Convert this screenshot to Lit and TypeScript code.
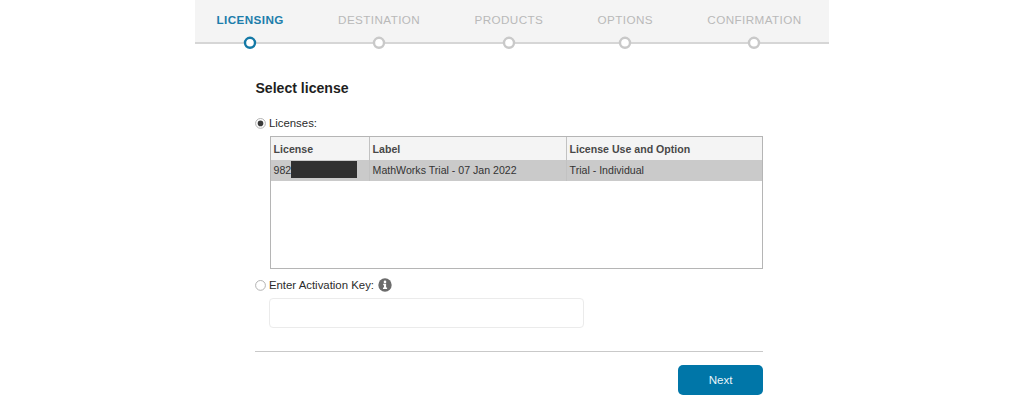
import { LitElement, html, css } from "lit";
import { customElement, state } from "lit/decorators.js";
import { classMap } from "lit/directives/class-map.js";

@customElement("step-header")
class StepHeader extends LitElement {
  static styles = css`
    :host { display: block; background: linear-gradient(#f4f4f4 0 42px, #d6d6d6 42px 43.5px, #fff 44px); height: 50px; }
    ol { list-style: none; margin: 0; padding: 12.4px 27.5px 0 22px; display: flex; justify-content: space-between; }
    li { display: flex; flex-direction: column; align-items: center; color: #b9b9b9; font-size: 11.7px; letter-spacing: 0.4px; line-height: 15px; }
    .on { color: #1d7dab; font-weight: bold; }
    svg { display: block; margin-top: 8.6px; width: 14px; height: 14px; }
  `;
  render() {
    const steps = ["LICENSING", "DESTINATION", "PRODUCTS", "OPTIONS", "CONFIRMATION"];
    return html`<ol>${steps.map((s, i) => html`
      <li class=${classMap({ on: i === 0 })}>
        <span>${s}</span>
        <svg viewBox="0 0 14 14"><circle cx="7" cy="6.8" r="5" fill="#fff" stroke=${i === 0 ? "#1479a6" : "#c9c9c9"} stroke-width="2.4"/></svg>
      </li>`)}</ol>`;
  }
}

@customElement("app-root")
class AppRoot extends LitElement {
  static styles = css`
    :host { display: block; height: 400px; overflow: hidden; background: #fff; color: #2b2b2b; font-family: "Liberation Sans", Arial, sans-serif; }
    step-header { width: 634.5px; margin-left: 194.5px; }
    main { width: 508px; margin-left: 255.4px; padding-top: 29px; }
    h1 { margin: 0; font-size: 14.1px; line-height: 18px; color: #1f1f1f; transform: scaleY(1.06); }
    .choice { display: flex; align-items: center; height: 16px; font-size: 11.4px; }
    .first { margin-top: 18px; }
    .radio { width: 11px; height: 11px; margin-right: 2.5px; display: block; }
    .info { width: 14px; height: 14px; margin-left: 4px; }
    .table { box-sizing: border-box; margin: 5px 0 0 14.2px; height: 132.5px; border: 1px solid #b5b5b5; font-size: 10.6px; }
    .row { display: grid; grid-template-columns: 98.4px 197px 1fr; height: 20.5px; background: #cacaca; line-height: 20px; color: #333; }
    .head { height: 23px; line-height: 22px; background: #f4f4f4; font-weight: bold; color: #484848; }
    .cell { padding-left: 3px; display: flex; align-items: center; }
    .cell .t { transform: scaleY(1.1); }
    .cell + .cell { border-left: 1px solid #c2c2c2; padding-left: 2.6px; }
    .mask { width: 66px; height: 17px; background: #303030; margin-top: -2px; }
    .second { margin-top: 8.5px; }
    .key { display: block; box-sizing: border-box; width: 315px; height: 30px; margin: 5px 0 0 13.5px; border: 1px solid #ebebeb; border-radius: 4px; background: #fff; outline: none; padding: 0 8px; }
    .foot { margin-top: 23px; border-top: 1px solid #c9c9c9; padding-top: 13px; display: flex; justify-content: flex-end; }
    button { width: 85.6px; height: 29.5px; border: 0; border-radius: 5px; background: #0076a8; color: #e9f5fa; font: 11.6px "Liberation Sans", Arial, sans-serif; padding: 0 0 1px; }
  `;

  @state() private choice = "license";

  private radio(name: string) {
    return html`<svg class="radio" viewBox="0 0 11 11" @click=${() => (this.choice = name)}>
      <circle cx="5.5" cy="5.4" r="4.9" fill="#fff" stroke="#aaa" stroke-width="0.9"/>
      ${this.choice === name ? html`<svg viewBox="0 0 11 11"><circle cx="5.5" cy="5.4" r="2.8" fill="#3a3a3a"/></svg>` : ""}
    </svg>`;
  }

  private row(cells: unknown[], head = false) {
    return html`<div class=${classMap({ row: true, head })}>${cells.map((c) => html`<div class="cell">${c}</div>`)}</div>`;
  }

  private text(value: string) {
    return html`<span class="t">${value}</span>`;
  }

  render() {
    return html`
      <step-header></step-header>
      <main>
        <h1>Select license</h1>
        <div class="choice first">${this.radio("license")}<span>Licenses:</span></div>
        <div class="table">
          ${this.row(["License", "Label", "License Use and Option"].map((v) => this.text(v)), true)}
          ${this.row([
            html`${this.text("982")}<span class="mask"></span>`,
            this.text("MathWorks Trial - 07 Jan 2022"),
            this.text("Trial - Individual"),
          ])}
        </div>
        <div class="choice second">${this.radio("key")}<span>Enter Activation Key:</span>
          <svg class="info" viewBox="0 0 14 14"><circle cx="7" cy="7" r="6.7" fill="#6c6c6c"/><path d="M5.2 5.7h2.9v3.7h1v1.5H5V9.4h1V7.2h-.8z" fill="#fff"/><circle cx="7" cy="3.9" r="1.3" fill="#fff"/></svg>
        </div>
        <input class="key" type="text" aria-label="Activation key">
        <div class="foot"><button>Next</button></div>
      </main>`;
  }
}
